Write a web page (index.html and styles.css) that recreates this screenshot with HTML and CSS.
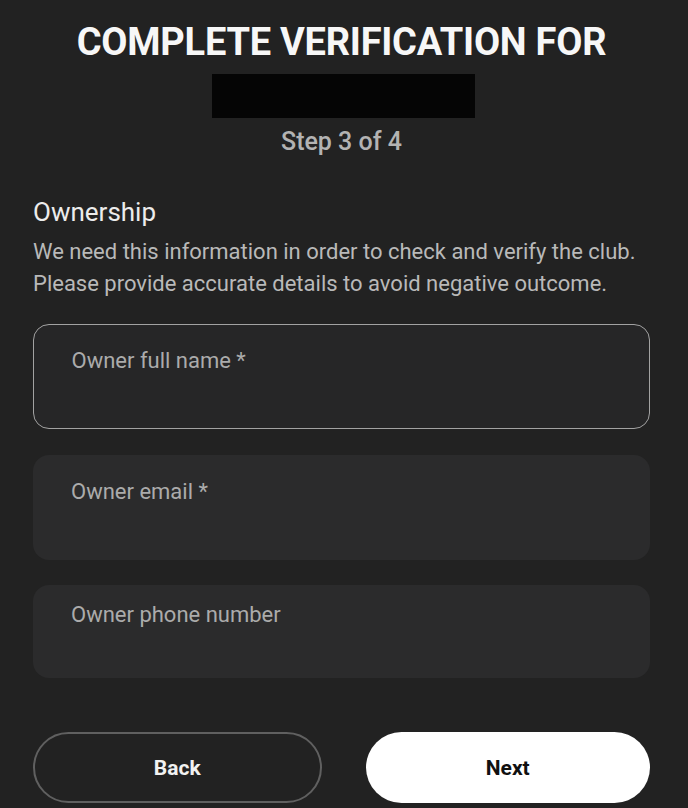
FILE: index.html
```html
<!DOCTYPE html>
<html lang="en">
<head>
<meta charset="utf-8">
<title>Complete verification</title>
<link rel="stylesheet" href="styles.css">
</head>
<body>
<main class="page">
  <header class="head">
    <h1 class="title">COMPLETE VERIFICATION FOR</h1>
    <div class="redacted"></div>
    <p class="step">Step 3 of 4</p>
  </header>
  <section class="section">
    <h2 class="section-title">Ownership</h2>
    <p class="section-text">We need this information in order to check and verify the club. Please provide accurate details to avoid negative outcome.</p>
  </section>
  <form class="fields">
    <label class="field field-focused"><span class="field-label">Owner full name *</span></label>
    <label class="field"><span class="field-label">Owner email *</span></label>
    <label class="field field-short"><span class="field-label">Owner phone number</span></label>
  </form>
  <div class="actions">
    <button class="btn btn-back" type="button">Back</button>
    <button class="btn btn-next" type="button">Next</button>
  </div>
</main>
</body>
</html>
```
FILE: styles.css
```css
* { box-sizing: border-box; }
html, body { margin: 0; padding: 0; }
body {
  background: #222222;
  font-family: Roboto, "Liberation Sans", Arial, sans-serif;
  color: #e6e6e6;
  width: 688px;
  height: 808px;
  overflow: hidden;
}
.page {
  padding: 20px 38px 0 33px;
}
.head {
  display: flex;
  flex-direction: column;
  align-items: center;
}
.title {
  margin: 0;
  font-size: 38px;
  line-height: 44px;
  font-weight: 700;
  color: #f7f7f7;
  letter-spacing: -0.25px;
}
.redacted {
  margin-top: 10px;
  width: 263px;
  height: 44px;
  background: #050505;
  margin-left: 3px;
}
.step {
  margin: 11px 0 0;
  font-size: 25px;
  line-height: 26px;
  font-weight: 500;
  color: #b3b3b3;
}
.section {
  margin-top: 43px;
}
.section-title {
  margin: 0;
  font-size: 26px;
  line-height: 28px;
  font-weight: 400;
  color: #ececec;
}
.section-text {
  margin: 10px 0 0;
  font-size: 22px;
  line-height: 32px;
  color: #b9b9b9;
}
.fields {
  margin: 24px 0 0;
  display: flex;
  flex-direction: column;
  gap: 26px;
}
.field {
  display: block;
  height: 105px;
  border-radius: 16px;
  background: #2b2b2c;
  padding: 25px 38px 0;
}
.field-focused {
  background: #262627;
  border: 1.5px solid #a2a2a2;
  padding-top: 23.5px;
  padding-left: 37.5px;
}
.field-short {
  height: 93px;
  padding-top: 18px;
  margin-top: -1px;
}
.field-label {
  display: block;
  font-size: 22px;
  line-height: 24px;
  color: #ababab;
}
.actions {
  margin-top: 54px;
  display: flex;
  gap: 44px;
}
.btn {
  flex: 1;
  height: 71px;
  border-radius: 36px;
  font-family: Roboto, "Liberation Sans", Arial, sans-serif;
  font-size: 21px;
  font-weight: 700;
  cursor: pointer;
}
.btn-back {
  background: #222222;
  border: 2px solid #606060;
  color: #f2f2f2;
}
.btn-next {
  background: #ffffff;
  border: none;
  color: #111111;
}
```
